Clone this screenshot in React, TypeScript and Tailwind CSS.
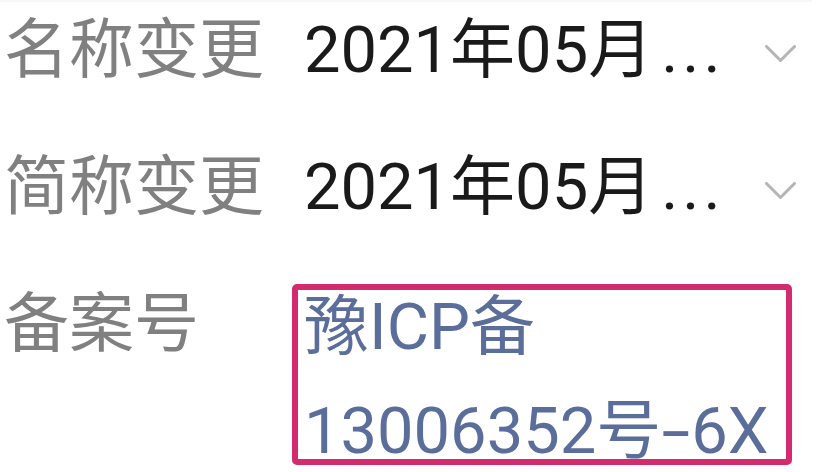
import React from "react";

function Chevron() {
  return (
    <svg width="31" height="19" viewBox="0 0 31 19" fill="none">
      <polyline
        points="1.5,1.5 15.5,15.5 29.5,1.5"
        stroke="#b5b5b5"
        strokeWidth="3"
        strokeLinecap="round"
        strokeLinejoin="round"
      />
    </svg>
  );
}

function SelectRow({ label, value }: { label: string; value: string }) {
  return (
    <div className="flex items-center pl-[4px] pr-[22px] h-[100px]">
      <div className="w-[300px] shrink-0 leading-[100px] text-[#808080] whitespace-nowrap">{label}</div>
      <div className="flex-1 leading-[100px] text-[#1a1a1a] whitespace-nowrap">
        {value}
        <span className="ml-[8px] tracking-[4px]">...</span>
      </div>
      <div className="pt-[8px] shrink-0">
        <Chevron />
      </div>
    </div>
  );
}

export default function App() {
  return (
    <div className="w-[818px] h-[472px] bg-white overflow-hidden text-[65px] font-['Roboto','Noto_Sans_CJK_SC',sans-serif]">
      <div className="h-[2px] bg-[#f7f7f7] mr-[6px]" />
      <div className="flex flex-col gap-[37px] -mt-[2px]">
        <SelectRow label="名称变更" value="2021年05月" />
        <SelectRow label="简称变更" value="2021年05月" />
        <div className="flex items-start pl-[4px]">
          <div className="w-[300px] shrink-0 leading-[100px] text-[#808080] whitespace-nowrap">备案号</div>
          <div className="relative w-[482px] mt-[1px] leading-[104px] text-[#5a6d9b]">
            豫ICP备13006352号<span className="inline-block scale-x-[1.6] mx-[6px]">-</span>6X
            <div className="absolute -left-[12px] top-[9px] w-[500px] h-[181px] border-[6px] border-[#d42a6e] rounded-[5px] pointer-events-none" />
          </div>
        </div>
      </div>
    </div>
  );
}
